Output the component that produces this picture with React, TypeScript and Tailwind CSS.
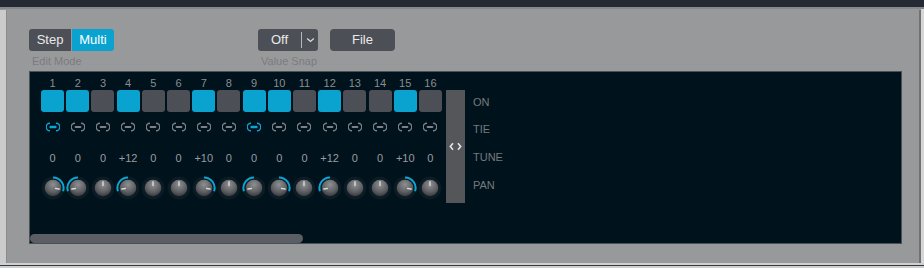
import React from "react";

const ON = [1, 1, 0, 1, 0, 0, 1, 0, 1, 1, 0, 1, 0, 0, 1, 0];
const TIE = [1, 0, 0, 0, 0, 0, 0, 0, 1, 0, 0, 0, 0, 0, 0, 0];
const TUNE = ["0", "0", "0", "+12", "0", "0", "+10", "0", "0", "0", "0", "+12", "0", "0", "+10", "0"];
// pan: 1 right, -1 left, 0 center
const PAN = [1, -1, 0, -1, 0, 0, 1, 0, -1, 1, 0, -1, 0, 0, 1, 0];

function TieIcon({ active }: { active: boolean }) {
  const c = active ? "#0aa6d4" : "#7d8286";
  return (
    <svg width="14" height="10" viewBox="0 0 14 10">
      <path d="M4 1.2 A3.8 3.8 0 0 0 4 8.8" fill="none" stroke={c} strokeWidth="1.4" />
      <path d="M10 1.2 A3.8 3.8 0 0 1 10 8.8" fill="none" stroke={c} strokeWidth="1.4" />
      <line x1="4.6" y1="5" x2="9.4" y2="5" stroke={c} strokeWidth={active ? 2.4 : 2} strokeLinecap="round" />
    </svg>
  );
}

function pt(r: number, deg: number) {
  const a = (deg * Math.PI) / 180;
  return { x: 12 + r * Math.sin(a), y: 12 - r * Math.cos(a) };
}

function Knob({ pan, id }: { pan: number; id: number }) {
  const ang = pan === 0 ? 0 : pan > 0 ? 100 : -100;
  const ra = 10.6;
  let arc: string | null = null;
  if (pan > 0) {
    const e = pt(ra, 108);
    arc = `M 12 ${12 - ra} A ${ra} ${ra} 0 0 1 ${e.x} ${e.y}`;
  } else if (pan < 0) {
    const s = pt(ra, -108);
    arc = `M ${s.x} ${s.y} A ${ra} ${ra} 0 0 1 12 ${12 - ra}`;
  }
  const i1 = pt(2.6, ang);
  const i2 = pt(6.2, ang);
  const gid = `kg${id}`;
  return (
    <svg width="24" height="24" viewBox="0 0 24 24">
      <defs>
        <radialGradient id={gid} cx="50%" cy="30%" r="75%">
          <stop offset="0%" stopColor="#8e8f91" />
          <stop offset="60%" stopColor="#5e5f62" />
          <stop offset="100%" stopColor="#2f3134" />
        </radialGradient>
      </defs>
      <circle cx="12" cy="12" r="11.4" fill="#0c1c25" />
      {arc && <path d={arc} fill="none" stroke="#0aa6d4" strokeWidth="2" />}
      <circle cx="12" cy="12" r="8.3" fill={`url(#${gid})`} />
      <line x1={i1.x} y1={i1.y} x2={i2.x} y2={i2.y} stroke="#d6d6d6" strokeWidth="1.5" strokeLinecap="round" />
    </svg>
  );
}

export default function App() {
  const font = { fontFamily: '"Liberation Sans", Arial, sans-serif' };
  return (
    <div className="w-[924px] h-[268px] bg-[#98999b] flex flex-col overflow-hidden" style={font}>
      <div className="h-[7px] bg-[#232a33] shrink-0" />
      <div className="h-[2px] bg-[#86888b] shrink-0" />
      <div className="flex flex-1 min-h-0">
        <div className="w-[7px] mt-[1px] bg-[#cbcbcb] border-r border-[#8a8b8d] shrink-0" />
        <div className="flex-1 flex flex-col pl-[22px] pt-[20px]">
          <div className="flex items-start shrink-0">
            <div className="flex flex-col w-[85px] shrink-0">
              <div className="flex h-[22px] shrink-0 rounded-[3px] overflow-hidden">
                <div className="w-[42px] bg-[#4d4f56] text-[#e9e9e9] text-[13px] flex items-center justify-center">Step</div>
                <div className="w-[1px] bg-[#98999b]" />
                <div className="w-[42px] bg-[#0aa3cf] text-white text-[13px] flex items-center justify-center">Multi</div>
              </div>
              <div className="text-[11px] leading-[14px] text-[#7b7c7e] mt-[3px] pl-[3px] whitespace-nowrap">Edit Mode</div>
            </div>
            <div className="flex flex-col ml-[144px] w-[60px] shrink-0">
              <div className="flex h-[22px] shrink-0 rounded-[3px] bg-[#4d4f56] items-center">
                <div className="w-[43px] text-[#e9e9e9] text-[13px] text-center">Off</div>
                <div className="w-[1px] h-[16px] bg-[#b8b9bb]" />
                <div className="flex-1 flex items-center justify-center">
                  <svg width="9" height="6" viewBox="0 0 9 6">
                    <path d="M1.2 1.4 L4.5 4.4 L7.8 1.4" fill="none" stroke="#d8d8d8" strokeWidth="1.4" />
                  </svg>
                </div>
              </div>
              <div className="text-[11px] leading-[14px] text-[#7b7c7e] mt-[3px] pl-[3px] whitespace-nowrap">Value Snap</div>
            </div>
            <div className="ml-[12px] w-[65px] h-[22px] shrink-0 rounded-[4px] bg-[#4d4f56] text-[#e9e9e9] text-[13px] flex items-center justify-center">
              File
            </div>
          </div>
          <div className="mt-[3px] w-[873px] h-[173px] shrink-0 bg-[#00121b] border border-[#4a5259] flex flex-col">
            <div className="flex-1 flex pl-[10px] pt-[4px]">
              <div className="flex">
                {ON.map((on, i) => (
                  <div key={i} className="w-[25.2px] flex flex-col items-center">
                    <div className="h-[14px] text-[11px] leading-[14px] text-[#8a8e92]">{i + 1}</div>
                    <div className={`w-[23px] h-[22px] rounded-[3px] ${on ? "bg-[#0aa3cf]" : "bg-[#4d4f56]"}`} />
                    <div className="h-[14px] mt-[8px] flex items-center justify-center">
                      <TieIcon active={!!TIE[i]} />
                    </div>
                    <div className="h-[14px] mt-[17px] text-[11px] leading-[14px] text-[#999da1]">{TUNE[i]}</div>
                    <div className="mt-[11px] flex items-center justify-center">
                      <Knob pan={PAN[i]} id={i} />
                    </div>
                  </div>
                ))}
              </div>
              <div className="ml-[3px] mt-[14px] w-[19px] h-[113px] bg-[#54565a] flex items-center justify-center">
                <svg width="13" height="9" viewBox="0 0 13 9">
                  <path d="M4 1.2 L1.3 4.5 L4 7.8" fill="none" stroke="#e4e4e4" strokeWidth="1.6" />
                  <path d="M9 1.2 L11.7 4.5 L9 7.8" fill="none" stroke="#e4e4e4" strokeWidth="1.6" />
                </svg>
              </div>
              <div className="ml-[8px] flex flex-col text-[11px] leading-[14px] text-[#767a7e] pt-[19px]">
                <div>ON</div>
                <div className="mt-[13px]">TIE</div>
                <div className="mt-[14px]">TUNE</div>
                <div className="mt-[14px]">PAN</div>
              </div>
            </div>
            <div className="h-[9px] w-[273px] rounded-full bg-[#5b5f64]" />
          </div>
        </div>
        <div className="w-[2px] bg-[#6f7174] mt-[1px] shrink-0" />
        <div className="w-[3px] bg-[#d6d6d6] shrink-0" />
      </div>
      <div className="h-[2px] bg-[#d0d0d0] shrink-0" />
      <div className="h-[1px] bg-[#3a3b3d] shrink-0" />
      <div className="h-[2px] bg-[#cfcfcf] shrink-0" />
    </div>
  );
}
